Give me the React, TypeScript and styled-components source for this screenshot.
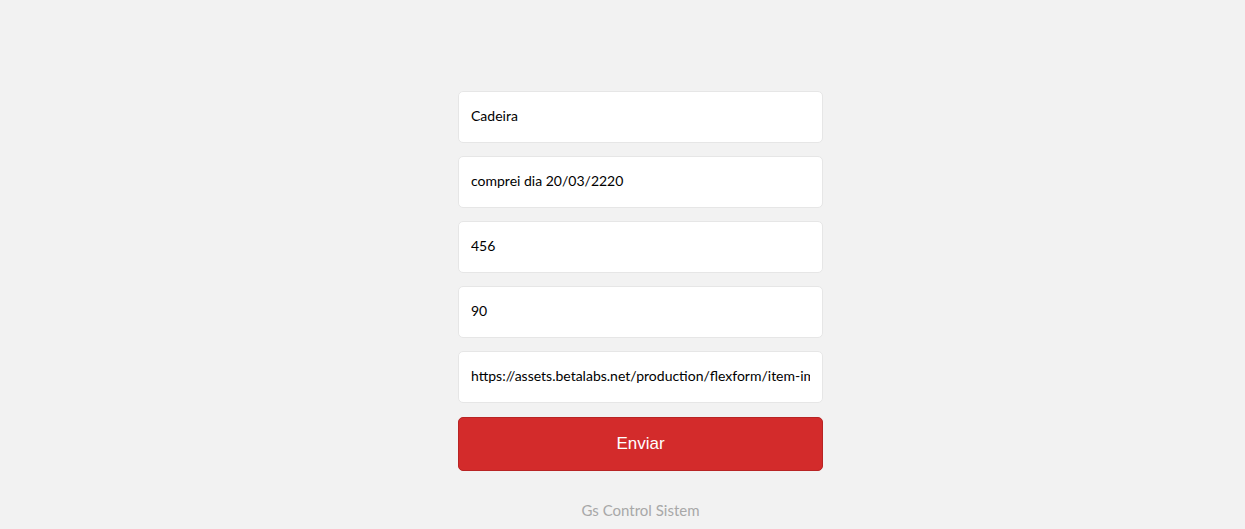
import styled, { createGlobalStyle } from "styled-components";

const GlobalStyle = createGlobalStyle`
  body {
    margin: 0;
    background-color: #f2f2f2;
    font-family: "Lato", "Open Sans", sans-serif;
  }
`;

const Wrapper = styled.div`
  min-height: 100vh;
  display: flex;
  flex-direction: column;
  align-items: center;
  padding: 91px 0 0 36px;
  box-sizing: border-box;
`;

const Form = styled.form`
  width: 365px;
  display: flex;
  flex-direction: column;
  gap: 13px;
`;

const Input = styled.input`
  height: 52px;
  box-sizing: border-box;
  padding: 0 12px 3px;
  border: 1px solid #e6e6e6;
  border-radius: 5px;
  background-color: #ffffff;
  font-family: "Lato", "Open Sans", sans-serif;
  font-size: 14px;
  color: #000;
  outline: none;
`;

const Button = styled.button`
  height: 54px;
  margin-top: 1px;
  border: 1px solid #b82424;
  border-radius: 5px;
  background-color: #d32b2b;
  color: #ffffff;
  font-family: "Liberation Sans", Arial, sans-serif;
  font-size: 17px;
  cursor: pointer;
`;

const Footer = styled.p`
  margin: 30px 0 0;
  font-size: 15px;
  color: #a8a8a8;
`;

const fields = [
  "Cadeira",
  "comprei dia 20/03/2220",
  "456",
  "90",
  "https://assets.betalabs.net/production/flexform/item-images/cadeira.jpg",
];

function App() {
  return (
    <>
      <GlobalStyle />
      <Wrapper>
        <Form onSubmit={(e) => e.preventDefault()}>
          {fields.map((value, i) => (
            <Input key={i} defaultValue={value} />
          ))}
          <Button type="submit">Enviar</Button>
        </Form>
        <Footer>Gs Control Sistem</Footer>
      </Wrapper>
    </>
  );
}

export default App;
